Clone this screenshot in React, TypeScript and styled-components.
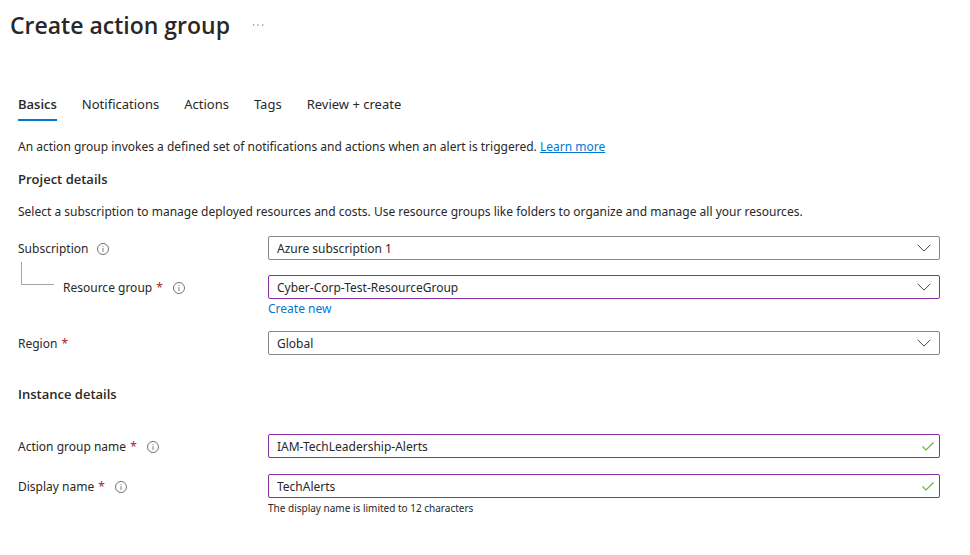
import React from "react";
import styled, { createGlobalStyle } from "styled-components";

const Global = createGlobalStyle`
  *, *::before, *::after { box-sizing: border-box; }
  body {
    margin: 0;
    background: #fff;
    color: #292827;
    font-family: "Segoe UI", "Noto Sans", "Open Sans", sans-serif;
    font-size: 12px;
    line-height: 16px;
  }
  button, input, select { font: inherit; color: inherit; }
`;

const Page = styled.div`
  padding: 8px 0 24px;
`;

const TitleBar = styled.header`
  display: flex;
  align-items: center;
  gap: 20px;
  padding-left: 10px;
`;

const Title = styled.h1`
  margin: 0;
  font-family: "Segoe UI", "Open Sans", sans-serif;
  font-size: 23px;
  font-weight: 600;
  line-height: 34px;
`;

const IconButton = styled.button`
  display: inline-flex;
  align-items: center;
  justify-content: center;
  padding: 0;
  border: 0;
  background: none;
  cursor: pointer;
`;

const TabList = styled.nav`
  display: flex;
  gap: 25px;
  padding: 54px 18px 0;
`;

const Tab = styled.button<{ $active?: boolean }>`
  padding: 0 0 6px;
  border: 0;
  border-bottom: 2px solid ${p => (p.$active ? "#0078d4" : "transparent")};
  background: none;
  font-family: "Segoe UI", ${p => (p.$active ? '"Open Sans"' : '"Noto Sans"')}, sans-serif;
  font-size: 13px;
  font-weight: ${p => (p.$active ? 600 : 400)};
  line-height: 17px;
  cursor: pointer;
`;

const Main = styled.main`
  padding: 18px 30px 0 18px;
`;

const Text = styled.p`
  margin: 0;
`;

const Link = styled.a<{ $underlined?: boolean }>`
  color: #0078d4;
  text-decoration: ${p => (p.$underlined ? "underline" : "none")};
`;

const SectionTitle = styled.h2`
  margin: 0;
  padding: 16px 0 17px;
  font-family: "Segoe UI", "Open Sans", sans-serif;
  font-size: 13px;
  font-weight: 600;
  line-height: 16px;
`;

const Fields = styled.div<{ $top: number; $gap: number }>`
  display: flex;
  flex-direction: column;
  gap: ${p => p.$gap}px;
  padding-top: ${p => p.$top}px;
`;

const Field = styled.div`
  display: grid;
  grid-template-columns: 250px minmax(0, 1fr);
`;

const LabelCell = styled.div`
  display: flex;
  align-items: center;
  height: 25px;
  gap: 9px;
`;

const Label = styled.label`
  font-size: 12px;
`;

const Required = styled.span`
  margin: 0 1px;
  color: #a4262c;
`;

const Connector = styled.span`
  align-self: flex-start;
  width: 33px;
  height: 23px;
  margin: -13px 0 0 3px;
  border: solid #a6a6a6;
  border-width: 0 0 1px 1px;
`;

const Control = styled.div<{ $accent?: boolean }>`
  display: flex;
  align-items: center;
  height: 24px;
  border: 1px solid ${p => (p.$accent ? "#8a2da5" : "#8a8886")};
  border-radius: 2px;
`;

const Select = styled.select`
  flex: 1;
  min-width: 0;
  height: 22px;
  margin-right: -22px;
  padding: 1px 30px 0 8px;
  border: 0;
  background: transparent;
  appearance: none;
  outline: none;
`;

const Input = styled.input`
  flex: 1;
  min-width: 0;
  height: 22px;
  padding: 0 8px;
  border: 0;
  background: transparent;
  outline: none;
`;

const Mark = styled.svg<{ $end: number }>`
  flex: none;
  margin-right: ${p => p.$end}px;
  pointer-events: none;
`;

const Below = styled.div`
  padding-top: 2px;
`;

const Hint = styled.div`
  padding-top: 2px;
  font-size: 10px;
`;

const Info = ({ about }: { about: string }) => (
  <IconButton type="button" aria-label={`About ${about}`}>
    <svg width="12" height="12" viewBox="0 0 12 12" fill="none" stroke="#75726f">
      <circle cx="6" cy="6" r="5.5" />
      <path d="M6 5v4M6 3v1" strokeWidth=".9" />
    </svg>
  </IconButton>
);

type FieldProps = {
  id: string;
  label: string;
  required?: boolean;
  info?: boolean;
  nested?: boolean;
  children: React.ReactNode;
};

const FormField = ({ id, label, required, info, nested, children }: FieldProps) => (
  <Field>
    <LabelCell>
      {nested && <Connector />}
      <Label htmlFor={id}>
        {label} {required && <Required>*</Required>}
      </Label>
      {info && <Info about={label} />}
    </LabelCell>
    <div>{children}</div>
  </Field>
);

const Dropdown = ({ id, value, accent }: { id: string; value: string; accent?: boolean }) => (
  <Control $accent={accent}>
    <Select id={id} defaultValue={value}>
      <option>{value}</option>
    </Select>
    <Mark $end={8} width="14" height="8" viewBox="0 0 14 8" fill="none" stroke="#484644">
      <path d="M.7.8 7 7.1 13.3.8" />
    </Mark>
  </Control>
);

const TextBox = ({ id, value }: { id: string; value: string }) => (
  <Control $accent>
    <Input id={id} type="text" defaultValue={value} />
    <Mark $end={5} width="12" height="9" viewBox="0 0 12 9" fill="none" stroke="#6bb12e" strokeWidth="1.2">
      <path d="M.5 4.5 4 8 11.5.5" />
    </Mark>
  </Control>
);

const tabs = ["Basics", "Notifications", "Actions", "Tags", "Review + create"];

export default function App() {
  return (
    <Page>
      <Global />
      <TitleBar>
        <Title>Create action group</Title>
        <IconButton type="button" aria-label="More actions">
          <svg width="16" height="16" viewBox="0 0 16 16" fill="#605e5c">
            <path d="M3 7.5h1.3v1.1H3zM7.4 7.5h1.3v1.1H7.4zM12 7.5h1.3v1.1H12z" />
          </svg>
        </IconButton>
      </TitleBar>
      <TabList>
        {tabs.map((tab, i) => (
          <Tab key={tab} type="button" $active={i === 0}>{tab}</Tab>
        ))}
      </TabList>
      <Main>
        <Text>
          An action group invokes a defined set of notifications and actions when an alert is triggered.{" "}
          <Link href="#learn" $underlined>Learn more</Link>
        </Text>
        <SectionTitle>Project details</SectionTitle>
        <Text>
          Select a subscription to manage deployed resources and costs. Use resource groups like folders to organize and manage all your resources.
        </Text>
        <Fields $top={16} $gap={14}>
          <FormField id="subscription" label="Subscription" info>
            <Dropdown id="subscription" value="Azure subscription 1" />
          </FormField>
          <FormField id="group" label="Resource group" required info nested>
            <Dropdown id="group" value="Cyber-Corp-Test-ResourceGroup" accent />
            <Below><Link href="#new">Create new</Link></Below>
          </FormField>
          <FormField id="region" label="Region" required>
            <Dropdown id="region" value="Global" />
          </FormField>
        </Fields>
        <Fields $top={14} $gap={15}>
          <SectionTitle>Instance details</SectionTitle>
          <FormField id="name" label="Action group name" required info>
            <TextBox id="name" value="IAM-TechLeadership-Alerts" />
          </FormField>
          <FormField id="display" label="Display name" required info>
            <TextBox id="display" value="TechAlerts" />
            <Hint>The display name is limited to 12 characters</Hint>
          </FormField>
        </Fields>
      </Main>
    </Page>
  );
}
